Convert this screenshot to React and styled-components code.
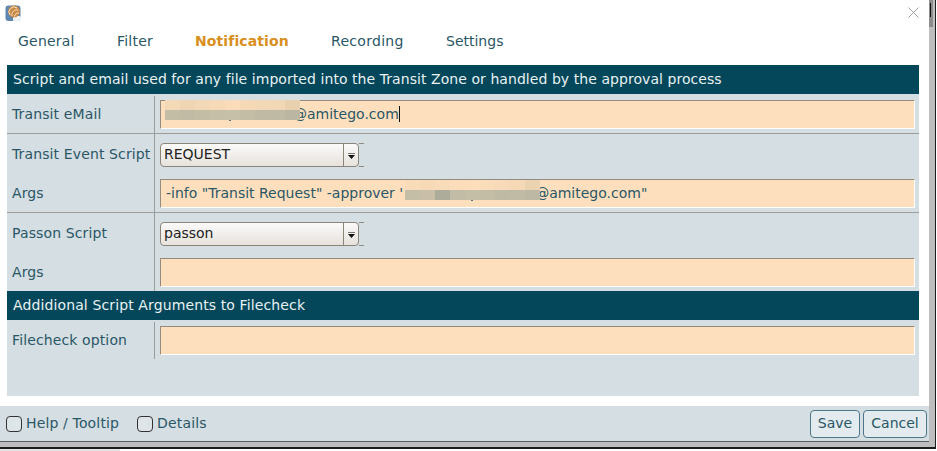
import React from "react";
import styled, { createGlobalStyle } from "styled-components";

const Global = createGlobalStyle`
  html, body { margin: 0; padding: 0; background: #fff; overflow: hidden; }
  body { font-family: "DejaVu Sans", sans-serif; font-size: 14px; color: #2a5766; }
`;
const Page = styled.div`
  width: 937px; height: 451px; display: flex; flex-direction: column; overflow: hidden; background: #fff;
`;
const Frame = styled.div`
  width: 936px; height: 449px; box-sizing: border-box; flex: none; display: flex; align-items: flex-start;
  background: #bdbdbd; border-right: 1px solid #1c1c1c; border-bottom: 2px solid #1c1c1c;
`;
const Strip = styled.div`
  width: 120px; height: 2px; background: #e6e6e6; flex: none;
`;
const Win = styled.div`
  width: 929px; height: 442px; background: #fff; flex: none; display: flex; flex-direction: column; box-sizing: border-box; border-bottom: 1px solid #5c5c5c;
`;
const Rail = styled.div`
  width: 6px; flex: none; position: relative;
`;
const Thumb = styled.div`
  width: 4px; height: 27px; background: #8c8c8c; position: relative;
  &::before { content: ""; position: absolute; left: 1px; top: 3px; width: 1px; height: 14px; background: #111; }
`;
const TitleBar = styled.div`
  height: 28px; flex: none; display: flex; align-items: flex-start; justify-content: space-between; padding: 5px 10px 0 5px; box-sizing: border-box;
`;
const CloseWrap = styled.div`
  margin-top: 2px; display: flex;
`;
const Tabs = styled.div`
  height: 37px; flex: none; display: flex; align-items: center; padding: 0 0 11px 18px; box-sizing: border-box; gap: 42px;
`;
const Tab = styled.div`
  width: ${p => p.$w}px; white-space: nowrap; font-size: 14px; line-height: 20px; letter-spacing: ${p => p.$ls}px;
  color: ${p => p.$active ? "#d98f1e" : "#2a5766"}; font-weight: ${p => p.$active ? 700 : 400};
`;
const Panel = styled.div`
  width: 912px; margin-left: 7px; height: 331px; flex: none; background: #d5dee3; display: flex; flex-direction: column;
`;
const Head = styled.div`
  height: 29px; flex: none; background: #04475a; color: #e9f1f3; display: flex; align-items: center; padding: 0 0 2px 6px; font-size: 14px; box-sizing: border-box;
  letter-spacing: ${p => p.$ls}px;
`;
const Group = styled.div`
  display: flex; flex-direction: column; flex: none; border-bottom: ${p => p.$line ? "1px solid #9c9c9a" : "none"};
`;
const Row = styled.div`
  display: grid; grid-template-columns: 148px 1fr; height: ${p => p.$h}px; flex: none;
`;
const Label = styled.div`
  display: flex; align-items: center; padding: 0 0 1px 5px; font-size: 14px; letter-spacing: 0.12px; color: #2a5766; border-right: 1px solid #9c9c9a; box-sizing: border-box;
  margin-top: ${p => p.$mt || 0}px;
`;
const Cell = styled.div`
  display: flex; align-items: flex-start; padding: ${p => p.$pt}px 4px 0 5px;
`;
const Field = styled.div`
  position: relative; flex: 1; height: 29px; box-sizing: border-box; background: #fedfbd;
  border-top: 1px solid #938c7e; border-left: 1px solid #938c7e; border-right: 1px solid #fff; border-bottom: 1px solid #fff;
  display: flex; align-items: center; padding: 0 0 1px 5px; font-size: 14px; color: #2a5766; white-space: pre;
`;
const Spacer = styled.span`
  display: inline-block; width: ${p => p.$w}px;
`;
const Caret = styled.span`
  display: inline-block; width: 1px; height: 16px; background: #111;
`;
const Mosaic = styled.div`
  position: absolute; left: ${p => p.$x}px; top: ${p => p.$y}px; display: flex; flex-direction: column;
`;
const TileRow = styled.div`
  display: flex;
`;
const Tile = styled.div`
  width: 15px; height: 10px; background: ${p => p.$c};
`;
const Speck = styled.div`
  position: absolute; left: ${p => p.$x}px; top: ${p => p.$y}px; width: 2px; height: 1px; background: #5d7278;
`;
const Combo = styled.div`
  width: 204px; height: 24px; display: flex; flex: none;
`;
const ComboBody = styled.div`
  width: 199px; height: 24px; box-sizing: border-box; border: 1px solid #8b8579; border-radius: 4px; display: flex; overflow: hidden;
  background: linear-gradient(#fbfaf9, #e6e2dd);
`;
const ComboText = styled.div`
  flex: 1; display: flex; align-items: center; padding: 0 0 3px 3px; color: #222; font-size: 14px; box-sizing: border-box;
`;
const ComboBtn = styled.div`
  width: 15px; flex: none; border-left: 1px solid #8b8579; display: flex; align-items: center; justify-content: center; padding-top: 1px; box-sizing: border-box;
`;
const ComboTail = styled.div`
  width: 5px; height: 24px; box-sizing: border-box; border-top: 1px solid #8f8b82; border-bottom: 1px solid #8f8b82;
`;
const Gap = styled.div`
  height: ${p => p.$h}px; flex: none;
`;
const Footer = styled.div`
  height: 35px; flex: none; margin-top: 10px; background: #d5dee3; display: flex; align-items: center; justify-content: space-between; padding: 0 2px 0 6px; box-sizing: border-box;
`;
const Checks = styled.div`
  display: flex; align-items: center; gap: 18px;
`;
const Check = styled.label`
  display: flex; align-items: center; gap: 4px; font-size: 14px; letter-spacing: 0.15px; color: #2a5766;
`;
const CheckText = styled.span`
  margin-bottom: 2px;
`;
const Box = styled.span`
  width: 16px; height: 16px; box-sizing: border-box; border: 1.5px solid #333; border-radius: 4px; background: #dde5e9; display: block;
`;
const Buttons = styled.div`
  display: flex; gap: 3px;
`;
const Btn = styled.button`
  width: ${p => p.$w}px; height: 28px; box-sizing: border-box; border: 1px solid #4d7788; border-radius: 4px; background: #e3ebef; color: #2a5766;
  font-family: "DejaVu Sans", sans-serif; font-size: 14px; padding: 0 0 2px;
`;

const Logo = () => (
  <svg width="17" height="17" viewBox="0 0 17 17">
    <rect x="0.5" y="0.5" width="15" height="15.5" rx="3" fill="#5f86b0" />
    <rect x="8" y="11" width="8" height="5.5" rx="1.5" fill="#eef1f4" />
    <circle cx="9" cy="6.5" r="6" fill="#c98a45" />
    <path d="M5 10 A5 5 0 0 1 12 3 M7 11 A5 5 0 0 1 13 5 M9.5 11.5 A4 4 0 0 1 14 8" fill="none" stroke="#f4e2c8" strokeWidth="1" />
  </svg>
);
const Close = () => (
  <svg width="11" height="11" viewBox="0 0 11 11">
    <path d="M0.5 0.5 L10.5 10.5 M10.5 0.5 L0.5 10.5" stroke="#a0a0a0" strokeWidth="1" fill="none" />
  </svg>
);
const Arrow = () => (
  <svg width="7" height="6" viewBox="0 0 7 6">
    <rect x="0" y="0" width="7" height="1" fill="#777" />
    <path d="M0 2 H7 L3.5 6 Z" fill="#111" />
  </svg>
);

const Select = ({ value }) => (
  <Combo>
    <ComboBody>
      <ComboText>{value}</ComboText>
      <ComboBtn><Arrow /></ComboBtn>
    </ComboBody>
    <ComboTail />
  </Combo>
);

const Blur = ({ x, y, top, bottom }) => (
  <Mosaic $x={x} $y={y}>
    <TileRow>{top.map((c, i) => <Tile key={i} $c={c} />)}</TileRow>
    <TileRow>{bottom.map((c, i) => <Tile key={i} $c={c} />)}</TileRow>
  </Mosaic>
);

const blurA = {
  top: ["#f4d9b7", "#efd5b4", "#f3d8b7", "#f6dab8", "#fadcba", "#f5d9b7", "#f3d8b7", "#f2d7b6", "#e9d1b0"],
  bottom: ["#c3bda6", "#c1bba5", "#c3bda6", "#c6bfa8", "#c7c0a9", "#c3bda6", "#c0baa4", "#bfbaa4", "#bab6a1"],
};
const blurB = {
  top: ["#f8dcba", "#f6dab8", "#f8dcba", "#fbddbb", "#fcdebc", "#f9dcba", "#f7dab9", "#f5d9b7", "#ebd3b2"],
  bottom: ["#c4bea7", "#c9bfa8", "#adac9a", "#c2bca6", "#c4bea7", "#c3bda6", "#bfbaa4", "#c0bba5", "#bcb8a3"],
};

export default function App() {
  return (
    <Page>
      <Global />
      <Frame>
        <Win>
          <TitleBar><Logo /><CloseWrap><Close /></CloseWrap></TitleBar>
          <Tabs>
            <Tab $w={57} $ls={0.22}>General</Tab>
            <Tab $w={36} $ls={0.22}>Filter</Tab>
            <Tab $w={94} $ls={0.1} $active>Notification</Tab>
            <Tab $w={73} $ls={0.3}>Recording</Tab>
            <Tab $w={57} $ls={0}>Settings</Tab>
          </Tabs>
          <Panel>
            <Head $ls={0.06}>Script and email used for any file imported into the Transit Zone or handled by the approval process</Head>
            <Group $line>
              <Row $h={39}>
                <Label $mt={2}>Transit eMail</Label>
                <Cell $pt={6}>
                  <Field>
                    <Spacer $w={127} />@amitego.com<Caret />
                    <Blur x={4} y={-1} {...blurA} />
                    <Speck $x={68} $y={19} />
                  </Field>
                </Cell>
              </Row>
            </Group>
            <Group $line>
              <Row $h={40}>
                <Label>Transit Event Script</Label>
                <Cell $pt={9}><Select value="REQUEST" /></Cell>
              </Row>
              <Row $h={38}>
                <Label>Args</Label>
                <Cell $pt={5}>
                  <Field>
                    -info "Transit Request" -approver '<Spacer $w={132} />@amitego.com"
                    <Blur x={244} y={0} {...blurB} />
                    <Speck $x={310} $y={20} />
                  </Field>
                </Cell>
              </Row>
            </Group>
            <Group>
              <Row $h={40}>
                <Label>Passon Script</Label>
                <Cell $pt={9}><Select value="passon" /></Cell>
              </Row>
              <Row $h={38}>
                <Label>Args</Label>
                <Cell $pt={5}><Field /></Cell>
              </Row>
            </Group>
            <Head $ls={0.12}>Addidional Script Arguments to Filecheck</Head>
            <Row $h={39}>
              <Label $mt={2}>Filecheck option</Label>
              <Cell $pt={6}><Field /></Cell>
            </Row>
            <Gap $h={37} />
          </Panel>
          <Footer>
            <Checks>
              <Check><Box /><CheckText>Help / Tooltip</CheckText></Check>
              <Check><Box /><CheckText>Details</CheckText></Check>
            </Checks>
            <Buttons>
              <Btn $w={50}>Save</Btn>
              <Btn $w={64}>Cancel</Btn>
            </Buttons>
          </Footer>
        </Win>
        <Rail><Thumb /></Rail>
      </Frame>
      <Strip />
    </Page>
  );
}
